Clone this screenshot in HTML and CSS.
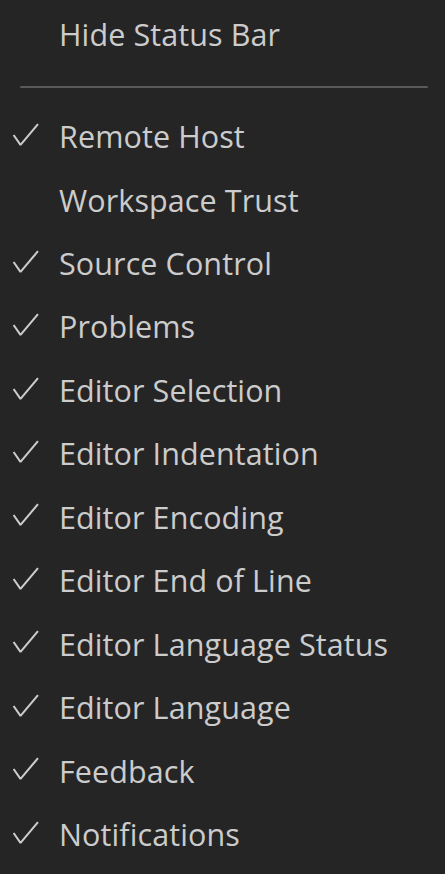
FILE: index.html
```html
<!DOCTYPE html>
<html lang="en">
<head>
<meta charset="utf-8">
<title>Status Bar Menu</title>
<link rel="stylesheet" href="styles.css">
</head>
<body>
<ul class="menu">
  <li class="item"><span class="check"></span><span class="label">Hide Status Bar</span></li>
  <li class="separator"><div class="line"></div></li>
  <li class="item checked"><span class="check"><svg viewBox="0 0 16 16"><path d="M14.431 3.323l-8.47 10-.79-.036-3.35-4.77.818-.574 2.978 4.24 8.051-9.506.764.646z"/></svg></span><span class="label">Remote Host</span></li>
  <li class="item"><span class="check"></span><span class="label">Workspace Trust</span></li>
  <li class="item checked"><span class="check"><svg viewBox="0 0 16 16"><path d="M14.431 3.323l-8.47 10-.79-.036-3.35-4.77.818-.574 2.978 4.24 8.051-9.506.764.646z"/></svg></span><span class="label">Source Control</span></li>
  <li class="item checked"><span class="check"><svg viewBox="0 0 16 16"><path d="M14.431 3.323l-8.47 10-.79-.036-3.35-4.77.818-.574 2.978 4.24 8.051-9.506.764.646z"/></svg></span><span class="label">Problems</span></li>
  <li class="item checked"><span class="check"><svg viewBox="0 0 16 16"><path d="M14.431 3.323l-8.47 10-.79-.036-3.35-4.77.818-.574 2.978 4.24 8.051-9.506.764.646z"/></svg></span><span class="label">Editor Selection</span></li>
  <li class="item checked"><span class="check"><svg viewBox="0 0 16 16"><path d="M14.431 3.323l-8.47 10-.79-.036-3.35-4.77.818-.574 2.978 4.24 8.051-9.506.764.646z"/></svg></span><span class="label">Editor Indentation</span></li>
  <li class="item checked"><span class="check"><svg viewBox="0 0 16 16"><path d="M14.431 3.323l-8.47 10-.79-.036-3.35-4.77.818-.574 2.978 4.24 8.051-9.506.764.646z"/></svg></span><span class="label">Editor Encoding</span></li>
  <li class="item checked"><span class="check"><svg viewBox="0 0 16 16"><path d="M14.431 3.323l-8.47 10-.79-.036-3.35-4.77.818-.574 2.978 4.24 8.051-9.506.764.646z"/></svg></span><span class="label">Editor End of Line</span></li>
  <li class="item checked"><span class="check"><svg viewBox="0 0 16 16"><path d="M14.431 3.323l-8.47 10-.79-.036-3.35-4.77.818-.574 2.978 4.24 8.051-9.506.764.646z"/></svg></span><span class="label">Editor Language Status</span></li>
  <li class="item checked"><span class="check"><svg viewBox="0 0 16 16"><path d="M14.431 3.323l-8.47 10-.79-.036-3.35-4.77.818-.574 2.978 4.24 8.051-9.506.764.646z"/></svg></span><span class="label">Editor Language</span></li>
  <li class="item checked"><span class="check"><svg viewBox="0 0 16 16"><path d="M14.431 3.323l-8.47 10-.79-.036-3.35-4.77.818-.574 2.978 4.24 8.051-9.506.764.646z"/></svg></span><span class="label">Feedback</span></li>
  <li class="item checked"><span class="check"><svg viewBox="0 0 16 16"><path d="M14.431 3.323l-8.47 10-.79-.036-3.35-4.77.818-.574 2.978 4.24 8.051-9.506.764.646z"/></svg></span><span class="label">Notifications</span></li>
</ul>
</body>
</html>
```
FILE: styles.css
```css
html, body {
  margin: 0;
  padding: 0;
  background: #252526;
}

body {
  width: 445px;
  height: 874px;
  overflow: hidden;
  font-family: "Open Sans", "Noto Sans", sans-serif;
  color: #cccccc;
}

.menu {
  list-style: none;
  margin: 0;
  padding: 0;
  display: flex;
  flex-direction: column;
}

.item {
  display: grid;
  grid-template-columns: 59px 1fr;
  height: 63.45px;
  font-size: 30.5px;
  line-height: 63.45px;
  white-space: nowrap;
}

.label {
  align-self: start;
  padding-top: 2.5px;
  letter-spacing: 0.1px;
}

.check {
  display: flex;
  align-items: center;
  padding-left: 9px;
  height: 63.45px;
}

.check svg {
  width: 33px;
  height: 33px;
  fill: #cccccc;
}

.separator {
  height: 39.2px;
  padding: 23px 17px 0 20px;
  box-sizing: border-box;
}

.separator .line {
  height: 2px;
  background: #5a5a5a;
  border-radius: 1px;
}
```
